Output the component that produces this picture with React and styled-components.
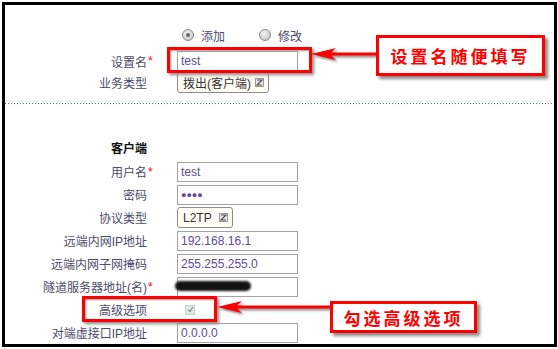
import React from 'react';
import styled, { createGlobalStyle } from 'styled-components';

const GlobalStyle = createGlobalStyle`
  body {
    margin: 0;
    background: #fff;
  }
`;

const Frame = styled.div`
  position: relative;
  box-sizing: border-box;
  width: 555px;
  height: 345px;
  margin: 2px;
  border: 3px solid #000;
  background: #fff;
  overflow: hidden;
  font: 12px "Liberation Sans", "Noto Sans CJK SC", sans-serif;
  color: #4b4b6b;
`;

const Section = styled.div`
  padding-top: ${p => p.top || 0}px;
`;

const RadioRow = styled.div`
  display: flex;
  align-items: center;
  height: 20px;
  padding-left: 177px;
  gap: 34px;
`;

const RadioItem = styled.label`
  display: flex;
  align-items: center;
  gap: 7px;
`;

const RadioDot = styled.span`
  box-sizing: border-box;
  width: 12px;
  height: 12px;
  border-radius: 50%;
  border: 1px solid #8a8a8a;
  background: radial-gradient(circle at 40% 35%, #f4f4f4, #bdbdbd);
  display: flex;
  align-items: center;
  justify-content: center;
  &::after {
    content: '';
    width: 4px;
    height: 4px;
    border-radius: 50%;
    background: ${p => (p.checked ? '#6a6a6a' : 'transparent')};
  }
`;

const Row = styled.div`
  display: flex;
  align-items: center;
  height: ${p => p.h || 21}px;
  margin-top: ${p => p.gap || 0}px;
`;

const Label = styled.span`
  width: 142px;
  text-align: right;
  white-space: nowrap;
  font-weight: ${p => (p.bold ? 700 : 400)};
  color: ${p => (p.bold ? '#111' : 'inherit')};
`;

const Star = styled.span`
  width: 8px;
  padding-left: 1px;
  color: #f00;
`;

const Field = styled.div`
  position: relative;
  margin-left: 21px;
  display: flex;
  align-items: center;
`;

const Input = styled.div`
  box-sizing: border-box;
  width: 121px;
  height: 20px;
  border: 1px solid #a3a3a3;
  padding: 0 3px;
  line-height: 18px;
  color: #5e4b94;
  font-size: ${p => (p.dots ? '9px' : '12px')};
  background: #fff;
`;

const Select = styled.div`
  box-sizing: border-box;
  width: ${p => p.w}px;
  height: 21px;
  border: 1px solid #8c8c8c;
  border-radius: 3px;
  background: #fffdf4;
  display: flex;
  align-items: center;
  justify-content: space-between;
  padding: 0 4px 0 5px;
  color: #333;
`;

const Divider = styled.div`
  margin-top: 10px;
  height: 1px;
  background-image: linear-gradient(to right, #12a03c 1px, transparent 1px);
  background-size: 3px 1px;
`;

const Check = styled.span`
  box-sizing: border-box;
  width: 10px;
  height: 10px;
  margin-left: 8px;
  border: 1px solid #c6cec6;
  background: #e2eae2;
  display: flex;
  align-items: center;
  justify-content: center;
`;

const Scribble = styled.span`
  position: absolute;
  left: -2px;
  top: 4px;
  width: 76px;
  height: 10px;
  border-radius: 6px;
  background: #111;
  filter: blur(0.8px);
`;

const Highlight = styled.div`
  position: absolute;
  box-sizing: border-box;
  left: ${p => p.x}px;
  top: ${p => p.y}px;
  width: ${p => p.w}px;
  height: ${p => p.h}px;
  border: 3px solid #f00;
  box-shadow: 2px 2px 3px #8a8a8a, inset 1px 1px 2px #9a9a9a;
`;

const Callout = styled.div`
  position: absolute;
  box-sizing: border-box;
  left: ${p => p.x}px;
  top: ${p => p.y}px;
  width: ${p => p.w}px;
  height: ${p => p.h}px;
  border: 3px solid #f00;
  background: #fff;
  box-shadow: 3px 3px 3px #8a8a8a;
  display: flex;
  align-items: center;
  justify-content: center;
  color: #f00;
  font: 700 17px "Noto Sans CJK SC", sans-serif;
  letter-spacing: 3px;
`;

const ArrowSvg = styled.svg`
  position: absolute;
  left: ${p => p.x}px;
  top: ${p => p.y}px;
  filter: drop-shadow(2px 2px 1px rgba(90, 90, 90, 0.7));
`;

const SelectIcon = () => (
  <svg width="9" height="9" viewBox="0 0 9 9">
    <rect x="0.5" y="0.5" width="8" height="8" fill="#e8e8e8" stroke="#9a9a9a" />
    <path d="M2 2h5L2 7h5" fill="none" stroke="#555" strokeWidth="1.2" />
  </svg>
);

const Arrow = ({ x, y, len }) => (
  <ArrowSvg x={x} y={y} width={len} height="16" viewBox={`0 0 ${len} 16`}>
    <polygon
      points={`1,8 26,2 21,6.5 ${len},6.5 ${len},9.5 21,9.5 26,14`}
      fill="#f00"
    />
  </ArrowSvg>
);

const FormRow = ({ label, star, children, gap = 2, h }) => (
  <Row gap={gap} h={h}>
    <Label>{label}</Label>
    <Star>{star ? '*' : ''}</Star>
    <Field>{children}</Field>
  </Row>
);

export default function App() {
  return (
    <>
      <GlobalStyle />
      <Frame>
        <Section top={20}>
          <RadioRow>
            <RadioItem>
              <RadioDot checked />
              添加
            </RadioItem>
            <RadioItem>
              <RadioDot />
              修改
            </RadioItem>
          </RadioRow>
          <FormRow label="设置名" star gap={5} h={22}>
            <Input>test</Input>
          </FormRow>
          <FormRow label="业务类型" gap={0}>
            <Select w={92}>
              拨出(客户端)
              <SelectIcon />
            </Select>
          </FormRow>
        </Section>
        <Divider />
        <Section top={33}>
          <Row h={20}>
            <Label bold>客户端</Label>
          </Row>
          <FormRow label="用户名" star gap={4}>
            <Input>test</Input>
          </FormRow>
          <FormRow label="密码">
            <Input dots>●●●●</Input>
          </FormRow>
          <FormRow label="协议类型">
            <Select w={56}>
              L2TP
              <SelectIcon />
            </Select>
          </FormRow>
          <FormRow label="远端内网IP地址">
            <Input>192.168.16.1</Input>
          </FormRow>
          <FormRow label="远端内网子网掩码">
            <Input>255.255.255.0</Input>
          </FormRow>
          <FormRow label="隧道服务器地址(名)" star>
            <Input />
            <Scribble />
          </FormRow>
          <FormRow label="高级选项">
            <Check>
              <svg width="7" height="7" viewBox="0 0 7 7">
                <path d="M1 3.5l1.8 2L6 1" fill="none" stroke="#7a8a7a" strokeWidth="1.1" />
              </svg>
            </Check>
          </FormRow>
          <FormRow label="对端虚接口IP地址">
            <Input>0.0.0.0</Input>
          </FormRow>
        </Section>

        <Highlight x={162} y={42} w={145} h={26} />
        <Arrow x={305} y={41} len={68} />
        <Callout x={371} y={30} w={169} h={41}>设置名随便填写</Callout>

        <Highlight x={77} y={291} w={135} h={26} />
        <Arrow x={211} y={294} len={116} />
        <Callout x={325} y={296} w={147} h={32}>勾选高级选项</Callout>
      </Frame>
    </>
  );
}
